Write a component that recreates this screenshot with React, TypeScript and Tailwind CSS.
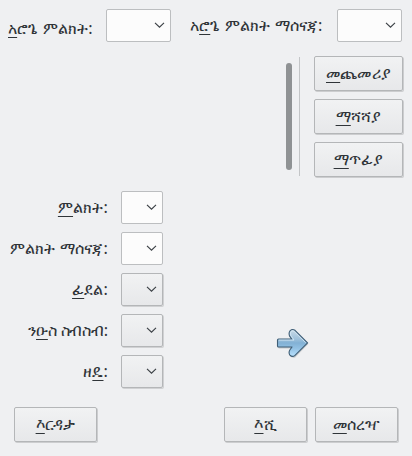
import type { ReactNode } from "react";

function Key({ children }: { children: ReactNode }) {
  return (
    <span className="underline decoration-1 underline-offset-[3px] [text-decoration-skip-ink:none]">
      {children}
    </span>
  );
}

function Chevron() {
  return (
    <svg width="11" height="7" viewBox="0 0 11 7" fill="none" stroke="#3b4045" strokeWidth="1.15">
      <path d="M1 0.9 L5.5 5.2 L10 0.9" />
    </svg>
  );
}

function Combo({ wide = false, raised = false }: { wide?: boolean; raised?: boolean }) {
  return (
    <button
      className={`flex h-[33px] shrink-0 items-center justify-end rounded-[2px] border pr-[5px] ${
        wide ? "w-[65px]" : "w-[42px]"
      } ${raised ? "border-[#b4b6b8] bg-linear-to-b from-[#f1f2f3] to-[#e7e8ea] shadow-[1px_1px_0_#d0d1d3]" : "border-[#bcbec0] bg-[#fcfcfc]"}`}
    >
      <Chevron />
    </button>
  );
}

function PushButton({ children, side = false }: { children: ReactNode; side?: boolean }) {
  return (
    <button
      className={`flex h-[35px] shrink-0 items-center justify-center rounded-[2px] border border-[#b4b6b8] bg-linear-to-b from-[#f1f2f3] to-[#e7e8ea] pb-[2px] tracking-[0.2px] shadow-[1px_1px_0_#cccdcf] ${
        side ? "w-[89px]" : "w-[83px]"
      }`}
    >
      {children}
    </button>
  );
}

function Row({ label, raised = false, tight = false }: { label: ReactNode; raised?: boolean; tight?: boolean }) {
  return (
    <div className="flex h-[33px] items-center justify-end gap-[13px]">
      <span className={`pb-px ${tight ? "tracking-[-0.2px]" : "tracking-[0.15px]"}`}>{label}</span>
      <Combo raised={raised} />
    </div>
  );
}

function Arrow() {
  return (
    <svg width="34" height="32" viewBox="0 0 34 32">
      <defs>
        <linearGradient id="arrowFill" x1="0" y1="0" x2="0" y2="1">
          <stop offset="0" stopColor="#c8dae6" />
          <stop offset="0.35" stopColor="#9fc1db" />
          <stop offset="0.5" stopColor="#82b1d5" />
          <stop offset="0.7" stopColor="#93c1e3" />
          <stop offset="1" stopColor="#b9e2ff" />
        </linearGradient>
      </defs>
      <path
        d="M3.2 12 H16 L13.8 9.7 V4.2 Q15.5 1.5 19.2 2.5 L32.3 16 L19.2 29.5 Q15.5 30.5 13.8 27.8 V23.5 L16.3 20.4 H3.2 Q2.2 20.4 2.2 19.4 V13 Q2.2 12 3.2 12Z"
        fill="#c6c9cc"
      />
      <path
        d="M2.5 11 H15.8 L13.6 8.2 Q12.4 4.8 14 2.8 Q16.3 0.5 19 2.3 L31.6 14.9 L19 27.4 Q16.3 29.6 13.9 27.1 Q12.3 24.7 13.8 22 L16 19 H2.5 Q1.5 19 1.5 18 V12 Q1.5 11 2.5 11Z"
        fill="url(#arrowFill)"
        stroke="#3f5e76"
        strokeWidth="1.1"
        strokeLinejoin="round"
      />
      <path d="M2.8 12.1 H18 L14.7 7.2 Q13.9 4.5 15.3 3.3 Q16.9 2.3 18.5 3.7 L29.7 14.7" fill="none" stroke="#d6e8f5" strokeWidth="0.8" />
    </svg>
  );
}

export default function App() {
  return (
    <main className="flex h-[456px] w-[412px] flex-col bg-[#eff0f2] font-['Noto_Sans',sans-serif] text-[16.2px] leading-[22px] whitespace-nowrap text-[#2f3438]">
      <header className="flex h-[56px] items-start pt-[9px] pl-2 tracking-[0.12px]">
        <div className="w-[98px] pt-[8px]">
          <Key>አ</Key>ሮጌ ምልክት:
        </div>
        <Combo wide />
        <div className="ml-[19px] w-[147px] pt-[5px]">
          አ<Key>ሮ</Key>ጌ ምልክት ማሰናጃ:
        </div>
        <Combo wide />
      </header>

      <section className="flex h-[135px] justify-end pr-[9px]">
        <div className="mt-[7px] h-[107px] w-[6px] rounded-full bg-[#8f9294]" />
        <div className="mt-px ml-[7px] h-[119px] w-px bg-[#c3c5c7]" />
        <div className="ml-[14px] flex flex-col gap-2">
          <PushButton side>
            <span><Key>መ</Key>ጨመሪያ</span>
          </PushButton>
          <PushButton side>
            <span><Key>ማ</Key>ሻሻያ</span>
          </PushButton>
          <PushButton side>
            <span><Key>ማ</Key>ጥፊያ</span>
          </PushButton>
        </div>
      </section>

      <section className="flex h-[216px]">
        <div className="flex w-[163px] flex-col gap-2">
          <Row label={<><Key>ም</Key>ልክት:</>} />
          <Row label="ምልክት ማሰናጃ:" />
          <Row raised label={<><Key>ፊ</Key>ደል:</>} />
          <Row raised tight label={<>ን<Key>ዑ</Key>ስ ስብስብ:</>} />
          <Row raised label={<>ዘ<Key>ዴ</Key>:</>} />
        </div>
        <div className="pt-[137px] pl-[113px]">
          <Arrow />
        </div>
      </section>

      <footer className="flex pr-[14px] pl-[14px]">
        <PushButton>
          <span><Key>እ</Key>ርዳታ</span>
        </PushButton>
        <div className="ml-auto flex gap-2">
          <PushButton>
            <span><Key>እ</Key>ሺ</span>
          </PushButton>
          <PushButton>
            <span><Key>መ</Key>ሰረዣ</span>
          </PushButton>
        </div>
      </footer>
    </main>
  );
}
